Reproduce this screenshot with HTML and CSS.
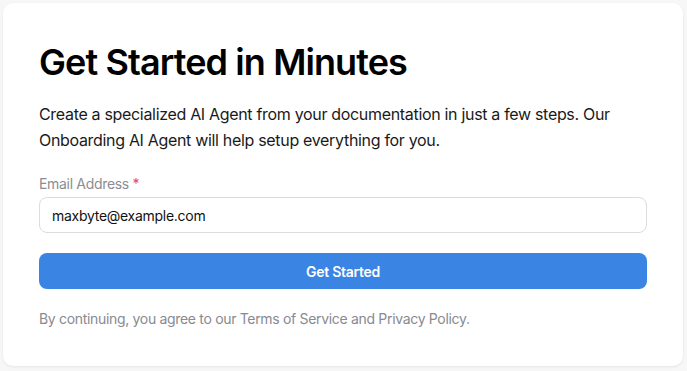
FILE: index.html
```html
<!DOCTYPE html>
<html lang="en">
<head>
<meta charset="utf-8">
<title>Get Started in Minutes</title>
<link rel="stylesheet" href="styles.css">
</head>
<body>
<main class="card">
  <h1 class="title">Get Started in Minutes</h1>
  <p class="lead">Create a specialized AI Agent from your documentation in just a few steps. Our Onboarding AI Agent will help setup everything for you.</p>
  <form class="form">
    <label class="label" for="email">Email Address <span class="req">*</span></label>
    <input class="input" id="email" type="email" value="maxbyte@example.com">
    <button class="button" type="button">Get Started</button>
  </form>
  <p class="terms">By continuing, you agree to our Terms of Service and Privacy Policy.</p>
</main>
</body>
</html>
```
FILE: styles.css
```css
* { box-sizing: border-box; }
html, body { margin: 0; }
body {
  background: #f7f7f7;
  padding: 3px 4px 5px 3px;
  font-family: Inter, "Noto Sans", sans-serif;
  color: #111;
  letter-spacing: -0.02em;
}
.card {
  background: #fff;
  border-radius: 10px;
  box-shadow: 0 1px 3px rgba(0,0,0,0.08);
  padding: 38px 36px 36px 36px;
  width: 680px;
  height: 363px;
}
.title {
  margin: 0;
  font-size: 36px;
  line-height: 1.2;
  font-weight: 600;
  color: #000;
  letter-spacing: -0.025em;
}
.lead {
  margin: 18px 0 0;
  font-size: 16px;
  line-height: 25.6px;
  color: #1a1a1a;
}
.form {
  display: flex;
  flex-direction: column;
  margin-top: 21px;
}
.label {
  font-size: 14px;
  line-height: 20px;
  color: #8a8d93;
  margin-bottom: 3px;
}
.req { color: #e5484d; }
.input {
  height: 36px;
  border: 1px solid #dcdcdf;
  border-radius: 8px;
  padding: 0 12px;
  font-family: inherit;
  font-size: 14px;
  letter-spacing: -0.02em;
  color: #111;
  background: #fff;
  outline: none;
}
.button {
  margin-top: 20px;
  height: 36px;
  border: none;
  border-radius: 8px;
  background: #3a84e4;
  color: #fff;
  font-family: inherit;
  font-size: 14px;
  font-weight: 600;
  letter-spacing: -0.02em;
}
.terms {
  margin: 20px 0 0;
  font-size: 14px;
  line-height: 20px;
  color: #878a90;
}
```
